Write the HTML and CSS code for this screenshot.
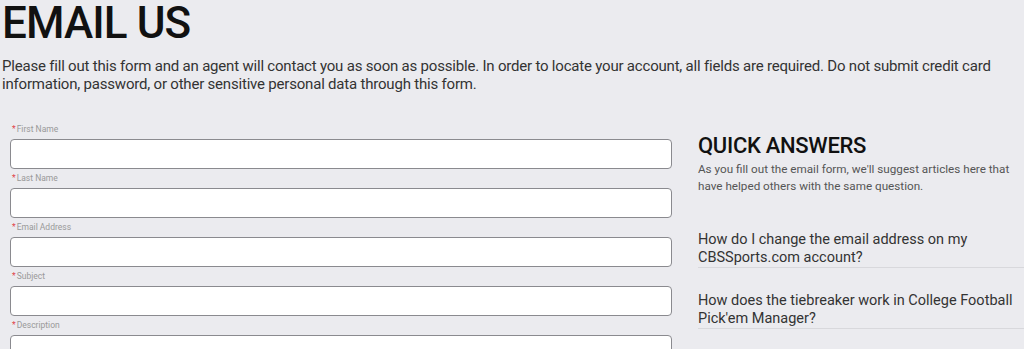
FILE: index.html
```html
<!DOCTYPE html>
<html lang="en">
<head>
  <meta charset="UTF-8">
  <title>Email Us</title>
  <link rel="stylesheet" href="styles.css">
</head>
<body>
  <header class="intro">
    <h1>EMAIL US</h1>
    <p>Please fill out this form and an agent will contact you as soon as possible. In order to locate your account, all fields are required. Do not submit credit card information, password, or other sensitive personal data through this form.</p>
  </header>

  <main class="layout">
    <form class="email-form">
      <label class="field">
        <span class="field-label"><span class="req">*</span>First Name</span>
        <input type="text" class="field-input">
      </label>
      <label class="field">
        <span class="field-label"><span class="req">*</span>Last Name</span>
        <input type="text" class="field-input">
      </label>
      <label class="field">
        <span class="field-label"><span class="req">*</span>Email Address</span>
        <input type="text" class="field-input">
      </label>
      <label class="field">
        <span class="field-label"><span class="req">*</span>Subject</span>
        <input type="text" class="field-input">
      </label>
      <label class="field">
        <span class="field-label"><span class="req">*</span>Description</span>
        <textarea class="field-input field-area"></textarea>
      </label>
    </form>

    <aside class="quick">
      <h2>QUICK ANSWERS</h2>
      <p class="quick-desc">As you fill out the email form, we'll suggest articles here that have helped others with the same question.</p>
      <ul class="answers">
        <li><a href="#">How do I change the email address on my CBSSports.com account?</a></li>
        <li><a href="#">How does the tiebreaker work in College Football Pick'em Manager?</a></li>
      </ul>
    </aside>
  </main>
</body>
</html>
```

FILE: styles.css
```css
* {
  margin: 0;
  padding: 0;
  box-sizing: border-box;
}

body {
  font-family: Roboto, "Liberation Sans", sans-serif;
  background-color: #ebebef;
  color: #333;
  overflow: hidden;
}

/* Header */
.intro {
  padding: 0 0 0 2px;
  max-width: 1010px;
}

.intro h1 {
  font-size: 44px;
  font-weight: 500;
  line-height: 46px;
  letter-spacing: -0.9px;
  color: #111;
}

.intro p {
  margin-top: 11px;
  font-size: 15px;
  line-height: 18px;
  letter-spacing: -0.2px;
  color: #333;
}

/* Layout */
.layout {
  display: flex;
  gap: 26px;
  padding-left: 10px;
  margin-top: 27px;
}

/* Form */
.email-form {
  width: 662px;
  flex-shrink: 0;
}

.field {
  display: block;
}

.field-label {
  display: block;
  height: 19px;
  padding-left: 2px;
  font-size: 8.5px;
  line-height: 19px;
  color: #999;
}

.req {
  color: #e0434b;
  margin-right: 1px;
}

.field-input {
  display: block;
  width: 100%;
  height: 30px;
  background: #fff;
  border: 1px solid #8a8a8f;
  border-radius: 4px;
  font-family: inherit;
}

.field-area {
  height: 80px;
  resize: none;
}

/* Quick answers */
.quick {
  flex: 1;
  padding-top: 13px;
}

.quick h2 {
  font-size: 22px;
  font-weight: 500;
  line-height: 26px;
  letter-spacing: -0.3px;
  color: #111;
}

.quick-desc {
  margin-top: 2px;
  font-size: 11.7px;
  line-height: 17px;
  color: #555;
}

.answers {
  list-style: none;
  margin-top: 12px;
}

.answers li {
  padding-top: 24px;
  border-bottom: 1px solid #d8d8dc;
}

.answers a {
  display: block;
  font-size: 14.5px;
  line-height: 18px;
  color: #333;
  text-decoration: none;
}
```
